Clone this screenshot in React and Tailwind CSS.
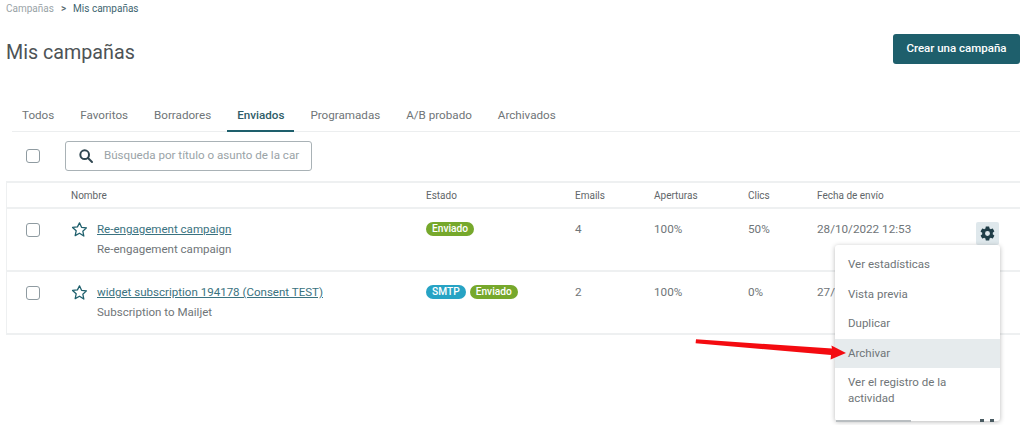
import React from "react";

const font = { fontFamily: "Roboto, 'Liberation Sans', sans-serif" };

function Star() {
  return (
    <svg width="17" height="17" viewBox="0 0 24 24" fill="none" stroke="#1e5f6c" strokeWidth="1.8" strokeLinejoin="round">
      <path d="M12 2.6l2.9 6.3 6.9.8-5.1 4.7 1.4 6.8L12 17.2l-6.1 3.4 1.4-6.8-5.1-4.7 6.9-.8z" />
    </svg>
  );
}

function Gear({ size = 17 }) {
  return (
    <svg width={size} height={size} viewBox="0 0 24 24" fill="#1f3d47">
      <path fillRule="evenodd" d="M19.4 13c.04-.33.1-.66.1-1s-.06-.67-.1-1l2.1-1.65c.2-.15.25-.42.12-.64l-2-3.46a.5.5 0 0 0-.61-.22l-2.49 1a7.3 7.3 0 0 0-1.69-.98l-.38-2.65A.49.49 0 0 0 14 2h-4c-.25 0-.46.18-.49.42l-.38 2.65c-.61.25-1.17.59-1.69.98l-2.49-1a.5.5 0 0 0-.61.22l-2 3.46a.5.5 0 0 0 .12.64L4.6 11c-.04.33-.1.66-.1 1s.06.67.1 1l-2.14 1.65a.5.5 0 0 0-.12.64l2 3.46c.12.22.39.3.61.22l2.49-1c.52.4 1.08.73 1.69.98l.38 2.65c.03.24.24.42.49.42h4c.25 0 .46-.18.49-.42l.38-2.65c.61-.25 1.17-.59 1.69-.98l2.49 1c.23.09.49 0 .61-.22l2-3.46a.5.5 0 0 0-.12-.64zM12 15.5a3.5 3.5 0 1 1 0-7 3.5 3.5 0 0 1 0 7z" />
    </svg>
  );
}

function Check() {
  return <span className="block w-[14px] h-[14px] rounded-[3px] border border-[#8f9ba1] bg-white" />;
}

function Badge({ color, children }) {
  return (
    <span className={`inline-flex items-center h-[14px] px-[6px] rounded-full text-white text-[10.2px] font-medium ${color}`}>
      {children}
    </span>
  );
}

const cols = "grid grid-cols-[64px_355px_149px_79px_94px_69px_1fr]";

function Row({ title, sub, badges, emails, opens, clicks, date, gear }) {
  return (
    <div className={`${cols} h-[63px] border-b-2 border-[#eef0f1] pt-[12px] text-[11.7px] text-[#6f7578]`}>
      <div className="pl-[19px] pt-[2px]"><Check /></div>
      <div className="flex gap-[9px]">
        <div><Star /></div>
        <div>
          <a className="block text-[11.55px] leading-[16px] text-[#3a7280] underline">{title}</a>
          <div className="mt-[4px] text-[11.55px] leading-[16px] text-[#6f7578]">{sub}</div>
        </div>
      </div>
      <div className="flex gap-[4px] pt-[1px] items-start">{badges}</div>
      <div className="leading-[16px]">{emails}</div>
      <div className="leading-[16px]">{opens}</div>
      <div className="leading-[16px]">{clicks}</div>
      <div className="flex justify-between leading-[16px]">
        <span>{date}</span>
        {gear}
      </div>
    </div>
  );
}

export default function App() {
  const tabs = ["Todos", "Favoritos", "Borradores", "Enviados", "Programadas", "A/B probado", "Archivados"];
  return (
    <div style={font} className="relative w-[1024px] h-[425px] overflow-hidden bg-white">
      <div className="pl-[6px] pr-[4px]">
        <nav className="flex items-center h-[17px] text-[10px] text-[#9aa3a7]">
          <span>Campañas</span>
          <span className="mx-[7px] text-[#52656c] font-medium">&gt;</span>
          <span className="text-[#3e6570]">Mis campañas</span>
        </nav>
        <div className="flex justify-between items-start mt-[17px]">
          <h1 className="text-[19.7px] leading-[36px] pt-[1px] text-[#4d5356]">Mis campañas</h1>
          <button className="w-[127px] h-[30px] rounded-[3px] bg-[#1e5f6c] text-white text-[11.5px] font-medium">Crear una campaña</button>
        </div>

        <div className="mt-[29px] ml-[6px] flex h-[32px] border-b border-[#eceeef] text-[11.65px] text-[#6f7578]">
          {tabs.map((t) => (
            <div
              key={t}
              className={
                t === "Enviados"
                  ? "h-[32px] px-[10px] mr-[6px] pt-[7px] border-b-2 border-[#1e5f6c] text-[#2f5d68] font-medium"
                  : "h-[32px] px-[10px] mr-[6px] pt-[7px]"
              }
            >
              {t}
            </div>
          ))}
        </div>

        <div className="flex items-center h-[30px] mt-[9px]">
          <div className="ml-[20px]"><Check /></div>
          <div className="ml-[25px] w-[247px] h-[30px] rounded-[3px] border border-[#a9b2b6] flex items-center pl-[12px] text-[11.6px] text-[#9aa3a7] whitespace-nowrap">
            <svg width="16" height="16" viewBox="0 0 24 24" fill="none" stroke="#2f4650" strokeWidth="3" strokeLinecap="round" className="shrink-0">
              <circle cx="10" cy="10" r="6.5" />
              <path d="M15 15l6 6" />
            </svg>
            <span className="ml-[10px]">Búsqueda por título o asunto de la car</span>
          </div>
        </div>

        <div className="mt-[10px] border-t-2 border-l border-[#eef0f1]">
          <div className={`${cols} h-[26px] items-center border-b-2 border-[#eef0f1] text-[10px] text-[#5f6669]`}>
            <div />
            <div>Nombre</div>
            <div>Estado</div>
            <div>Emails</div>
            <div>Aperturas</div>
            <div>Clics</div>
            <div>Fecha de envío</div>
          </div>
          <Row
            title="Re-engagement campaign"
            sub="Re-engagement campaign"
            badges={<Badge color="bg-[#76a82c]">Enviado</Badge>}
            emails="4"
            opens="100%"
            clicks="50%"
            date="28/10/2022 12:53"
            gear={
              <span className="flex items-center justify-center w-[23px] h-[23px] mt-[1px] mr-[21px] rounded-[2px] bg-[#dfe8ec]">
                <Gear />
              </span>
            }
          />
          <Row
            title="widget subscription 194178 (Consent TEST)"
            sub="Subscription to Mailjet"
            badges={
              <>
                <Badge color="bg-[#27a3c4]">SMTP</Badge>
                <Badge color="bg-[#76a82c]">Enviado</Badge>
              </>
            }
            emails="2"
            opens="100%"
            clicks="0%"
            date="27/"
          />
        </div>
      </div>

      <div className="absolute left-[835px] top-[245px] w-[165px] h-[176px] rounded-[3px] bg-white shadow-[0_1px_5px_rgba(0,0,0,0.28)] pt-[5px] text-[11.5px] text-[#6f7578]">
        <div className="h-[29px] pl-[13px] flex items-center">Ver estadísticas</div>
        <div className="h-[30px] pl-[13px] pt-[1px] flex items-center">Vista previa</div>
        <div className="h-[30px] pl-[13px] flex items-center">Duplicar</div>
        <div className="h-[29px] pl-[13px] flex items-center bg-[#e6ebed]">Archivar</div>
        <div className="pl-[13px] pt-[6px] leading-[16px]">Ver el registro de la<br />actividad</div>
      </div>

      {/* Sliver of the row behind the menu that shows along its bottom edge */}
      <div className="absolute left-[836px] top-[419px] w-[160px] h-[3px] flex justify-between gap-[8px] overflow-hidden">
        <span className="w-[75px] h-[2px] mt-[1px] bg-[#b9bec1]" />
        <span className="flex gap-[6px] mr-[2px]">
          <span className="w-[4px] h-[3px] bg-[#4a5b62]" />
          <span className="w-[4px] h-[3px] bg-[#4a5b62]" />
        </span>
      </div>

      <svg className="absolute left-0 top-0 pointer-events-none" width="1024" height="425">
        <path d="M696 339.2L832 348.6L831.4 345.5L846 353L830.6 359.5L831 355L695.6 343.2Z" fill="#f40b10" />
      </svg>
    </div>
  );
}
